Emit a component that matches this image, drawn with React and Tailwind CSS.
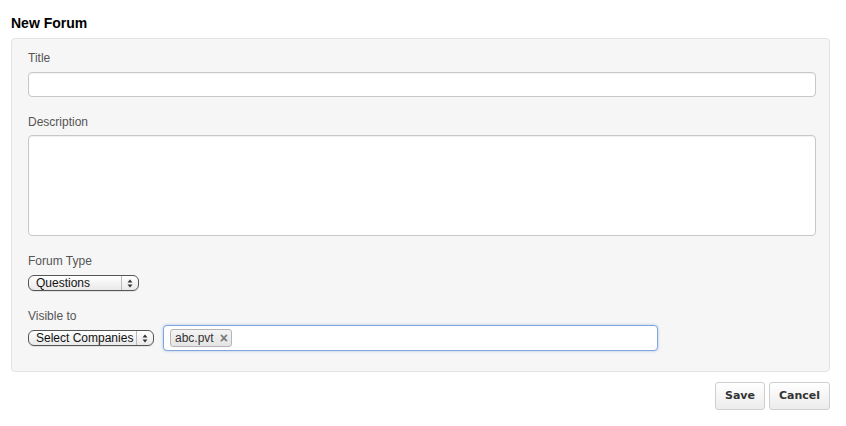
import { useState } from "react";

function MacSelect({ value, width }) {
  return (
    <div
      className={`flex items-center h-[16px] ${width} rounded-[6px] border border-[#555] bg-gradient-to-b from-[#ffffff] to-[#e9e9e9] shadow-[0_1px_0_rgba(0,0,0,0.08)]`}
    >
      <span className="flex-1 pl-[7px] text-[12px] leading-[14px] text-[#111] truncate">
        {value}
      </span>
      <span className="flex flex-col items-center justify-center w-[17px] h-full border-l border-[#bbb]">
        <svg width="6" height="9" viewBox="0 0 6 9">
          <path d="M3 0.5 L5.5 3.5 L0.5 3.5 Z" fill="#333" />
          <path d="M3 8.5 L5.5 5.5 L0.5 5.5 Z" fill="#333" />
        </svg>
      </span>
    </div>
  );
}

export default function App() {
  const [tags, setTags] = useState(["abc.pvt"]);

  return (
    <div className="w-[846px] h-[426px] bg-white font-['Liberation_Sans',Arial,sans-serif]">
      <h2 className="pl-[11px] pt-[15px] mb-[7px] text-[14px] leading-[16px] font-bold text-black">
        New Forum
      </h2>

      <div className="ml-[11px] w-[819px] rounded-[4px] border border-[#e3e3e3] bg-[#f6f6f6] pl-[16px] pr-[13px] pt-[11px] pb-[20px]">
        {/* Title */}
        <label className="block text-[12px] leading-[16px] text-[#555] mb-[6px]">Title</label>
        <input className="block w-full h-[25px] rounded-[4px] border border-[#c8c8c8] bg-white shadow-[inset_0_1px_1px_rgba(0,0,0,0.06)] outline-none" />

        {/* Description */}
        <label className="block mt-[17px] text-[12px] leading-[16px] text-[#555] mb-[5px]">
          Description
        </label>
        <textarea className="block w-full h-[101px] rounded-[4px] border border-[#c8c8c8] bg-white resize-none shadow-[inset_0_1px_1px_rgba(0,0,0,0.06)] outline-none" />

        {/* Forum type */}
        <label className="block mt-[17px] text-[12px] leading-[16px] text-[#555] mb-[6px]">
          Forum Type
        </label>
        <MacSelect value="Questions" width="w-[111px]" />

        {/* Visible to */}
        <label className="block mt-[17px] text-[12px] leading-[16px] text-[#555] mb-[1px]">
          Visible to
        </label>
        <div className="flex items-center gap-[9px]">
          <MacSelect value="Select Companies" width="w-[126px]" />
          <div className="flex items-center w-[495px] h-[26px] rounded-[4px] border border-[#7ea6dc] bg-white shadow-[0_0_3px_rgba(82,130,210,0.45)] pl-[6px]">
            {tags.map((t) => (
              <span
                key={t}
                className="flex items-center h-[18px] pl-[4px] pr-[3px] rounded-[3px] border border-[#b5b5b5] bg-gradient-to-b from-[#f4f4f4] to-[#e4e4e4] text-[12px] leading-[14px] text-[#333]"
              >
                {t}
                <button
                  onClick={() => setTags(tags.filter((x) => x !== t))}
                  className="ml-[6px] text-[14px] leading-[14px] font-bold text-[#777]"
                >
                  ×
                </button>
              </span>
            ))}
          </div>
        </div>
      </div>

      <div className="flex justify-end gap-[4px] w-[830px] mt-[10px]">
        <button className="h-[28px] w-[50px] rounded-[3px] border border-[#cfcfcf] bg-gradient-to-b from-[#ffffff] to-[#ececec] text-[11px] font-bold text-[#333] font-['DejaVu_Sans',sans-serif]">
          Save
        </button>
        <button className="h-[28px] w-[61px] rounded-[3px] border border-[#cfcfcf] bg-gradient-to-b from-[#ffffff] to-[#ececec] text-[11px] font-bold text-[#333] font-['DejaVu_Sans',sans-serif]">
          Cancel
        </button>
      </div>
    </div>
  );
}
